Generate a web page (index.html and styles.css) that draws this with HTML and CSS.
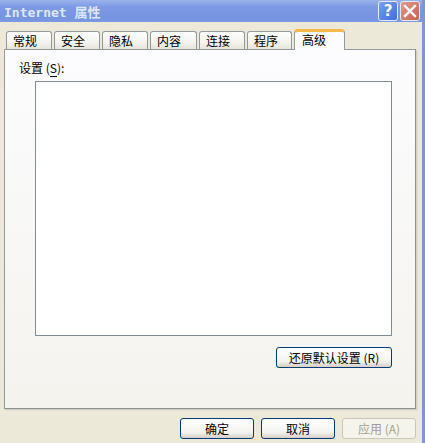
FILE: index.html
```html
<!DOCTYPE html>
<html lang="zh">
<head>
<meta charset="utf-8">
<link rel="stylesheet" href="styles.css">
</head>
<body>
<div class="window">
  <div class="titlebar">
    <span class="title">Internet 属性</span>
    <div class="tb-buttons">
      <span class="tb-btn help">?</span>
      <span class="tb-btn close">
        <svg width="14" height="14" viewBox="0 0 14 14"><path d="M2 2 L12 12 M12 2 L2 12" stroke="#fff" stroke-width="2.4" stroke-linecap="square"/></svg>
      </span>
    </div>
  </div>
  <div class="body">
    <div class="tabs">
      <span class="tab w46">常规</span>
      <span class="tab w46">安全</span>
      <span class="tab w46">隐私</span>
      <span class="tab w47">内容</span>
      <span class="tab w46">连接</span>
      <span class="tab w45">程序</span>
      <span class="tab active">高级</span>
    </div>
    <div class="panel">
      <div class="label">设置 (<u>S</u>):</div>
      <div class="listbox"></div>
      <div class="panel-actions">
        <button class="btn wide">还原默认设置 (<u>R</u>)</button>
      </div>
    </div>
    <div class="footer">
      <button class="btn">确定</button>
      <button class="btn">取消</button>
      <button class="btn disabled">应用 (<u>A</u>)</button>
    </div>
  </div>
</div>
</body>
</html>
```
FILE: styles.css
```css
html, body {
  margin: 0;
  padding: 0;
}
body {
  width: 425px;
  height: 443px;
  overflow: hidden;
  background: #ece9d8;
  font-family: "Noto Sans CJK SC", "DejaVu Sans", sans-serif;
  font-size: 12px;
  color: #000;
}
.window {
  width: 425px;
  height: 443px;
  display: flex;
  flex-direction: column;
  box-sizing: border-box;
  border-right: 3px solid #7a96df;
}
.titlebar {
  height: 22px;
  flex: none;
  display: flex;
  align-items: center;
  justify-content: space-between;
  background: linear-gradient(#9cb3ec, #7d9ae3 30%, #7594e0 80%, #7c99e1);
  padding-left: 4px;
  padding-right: 2px;
}
.title {
  font-family: "DejaVu Sans Mono", "Noto Sans CJK SC", monospace;
  font-weight: bold;
  font-size: 13px;
  color: #dfe6f7;
}
.tb-buttons {
  display: flex;
  gap: 2px;
}
.tb-btn {
  width: 20px;
  height: 20px;
  box-sizing: border-box;
  border: 1px solid #e3e9f8;
  border-radius: 3px;
  display: flex;
  align-items: center;
  justify-content: center;
  color: #fff;
}
.help {
  background: linear-gradient(135deg, #7a9eef, #3d6fdc);
  font-family: "DejaVu Sans", sans-serif;
  font-weight: bold;
  font-size: 15px;
}
.close {
  background: linear-gradient(135deg, #e29a8c, #c6604f);
}
.body {
  flex: 1;
  display: flex;
  flex-direction: column;
  padding: 7px 6px 0 4px;
}
.tabs {
  display: flex;
  align-items: flex-end;
  gap: 2px;
  padding-left: 2px;
  height: 21px;
  position: relative;
  z-index: 1;
  margin-bottom: -1px;
}
.tab {
  height: 18px;
  box-sizing: border-box;
  border: 1px solid #919b9c;
  border-bottom: none;
  border-radius: 3px 3px 0 0;
  background: linear-gradient(#fefefe, #f4f3ee 60%, #e7e5dc);
  padding-left: 6px;
  line-height: 17px;
  margin-bottom: 1px;
}
.w46 { width: 46px; }
.w47 { width: 47px; }
.w45 { width: 45px; }
.tab.active {
  width: 51px;
  height: 21px;
  background: #fcfcfe;
  border-top: 3px solid #f5b84a;
  border-radius: 4px 4px 0 0;
  padding-left: 7px;
  line-height: 16px;
  margin-bottom: 0;
}
.panel {
  width: 412px;
  height: 360px;
  box-sizing: border-box;
  border: 1px solid #919b9c;
  border-right-color: #8a9292;
  border-bottom-color: #8a9292;
  background: linear-gradient(#fcfcfe, #f4f3ee);
  box-shadow: 1px 1px 0 #d0cfc4, 2px 2px 0 #e2e0d4;
  padding: 11px 0 0 14px;
  display: flex;
  flex-direction: column;
}
.label {
  height: 14px;
  line-height: 14px;
}
.label u {
  text-decoration: none;
  border-bottom: 1px solid #000;
}
.listbox {
  margin-top: 6px;
  margin-left: 16px;
  width: 357px;
  height: 255px;
  box-sizing: border-box;
  border: 1px solid #7f8c99;
  background: #fff;
}
.panel-actions {
  display: flex;
  justify-content: flex-end;
  width: 373px;
  margin-top: 11px;
}
.btn {
  font-family: "Noto Sans CJK SC", "DejaVu Sans", sans-serif;
  font-size: 12px;
  width: 74px;
  height: 21px;
  padding: 0;
  box-sizing: border-box;
  border: 1px solid #003c74;
  border-radius: 3px;
  background: linear-gradient(#ffffff, #f3f3ef 70%, #d6d0c5);
  color: #000;
  line-height: 18px;
}
.btn.wide {
  width: 116px;
}
.btn u {
  text-decoration: none;
}
.btn.disabled {
  border-color: #c9c7ba;
  background: #f5f4ea;
  color: #a1a192;
}
.footer {
  display: flex;
  justify-content: flex-end;
  gap: 7px;
  margin-top: 9px;
}
```
